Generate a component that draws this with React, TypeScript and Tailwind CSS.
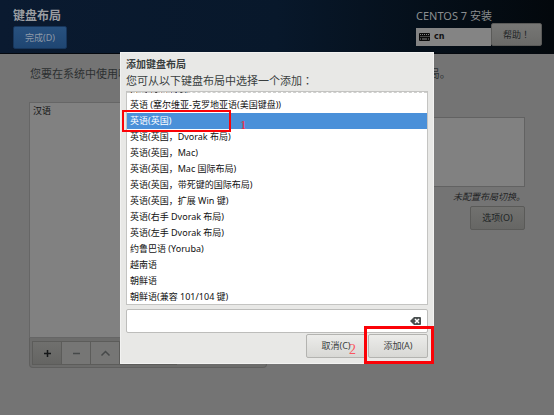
import React, { useState } from 'react';

const layouts = [
    '英语(尼日利亚)',
    '英语 (塞尔维亚-克罗地亚语(美国键盘))',
    '英语(英国)',
    '英语(英国，Dvorak 布局)',
    '英语(英国，Mac)',
    '英语(英国，Mac 国际布局)',
    '英语(英国，带死键的国际布局)',
    '英语(英国，扩展 Win 键)',
    '英语(右手 Dvorak 布局)',
    '英语(左手 Dvorak 布局)',
    '约鲁巴语 (Yoruba)',
    '越南语',
    '朝鲜语',
    '朝鲜语(兼容 101/104 键)',
];

const KeyboardIcon = () => (
    <svg width="11" height="8" viewBox="0 0 11 8" aria-hidden="true">
        <rect width="11" height="8" rx="1" fill="#0b0b0b" />
        <path d="M1 1.5h9M1.5 3.5h9" stroke="#858585" strokeWidth="1" strokeDasharray="1 1" />
        <path d="M1 6h1M3 6h5M9 6h1" stroke="#858585" strokeWidth="1" />
    </svg>
);

const ClearIcon = () => (
    <svg width="11" height="8" viewBox="0 0 11 8" aria-hidden="true">
        <path d="M4 0h6a1 1 0 0 1 1 1v6a1 1 0 0 1-1 1H4L0 4z" fill="#4a4f50" />
        <path d="M5 2l4 4M9 2l-4 4" stroke="#fff" strokeWidth="1.5" />
    </svg>
);

const toolbarItems = [
    { label: '添加', d: 'M4 7.5h7M7.5 4v7', active: true },
    { label: '删除', d: 'M4 7.5h7', active: false },
    { label: '上移', d: 'M3.5 9.5l4-4 4 4', active: false },
    { label: '下移', d: 'M3.5 5.5l4 4 4-4', active: false },
    { label: '预览', d: 'M3 5h9v5H3z', active: false },
];

const Header = () => (
    <header className="flex h-[54px] items-start justify-between border-b border-[#04080e] bg-linear-to-r from-[#0a1a30] via-[#08182b] to-[#03080c] pt-2 pr-3 pl-[13px]">
        <div>
            <h1 className="h-[15px] text-[12px] leading-[15px] font-bold text-[#9a9da1]">键盘布局</h1>
            <button className="h-[23px] w-[54px] rounded-xs border border-[#16355b] bg-linear-to-b from-[#28517f] to-[#1f4672] text-[9px] text-[#8d99a8]">
                完成(D)
            </button>
        </div>
        <div>
            <p className="h-[15px] text-[11px] leading-[15px] text-[#8b8e90]">CENTOS 7 安装</p>
            <div className="flex items-end">
                <div className="flex h-[18px] w-[75px] items-center gap-1 bg-[#848484] pl-[3px] font-['DejaVu_Sans',sans-serif] text-[8px] font-bold text-[#111]">
                    <KeyboardIcon />
                    cn
                </div>
                <button className="h-[23px] w-[51px] rounded-xs border border-[#5a5a58] bg-linear-to-b from-[#777775] to-[#6a6a68] font-['Noto_Sans','Noto_Sans_CJK_TC',sans-serif] text-[9px] text-[#202425]">
                    帮助！
                </button>
            </div>
        </div>
    </header>
);

const LayoutPanel = () => (
    <section className="flex w-[238px] flex-col">
        <ul className="h-[236px] border border-[#666] bg-[#818181] text-[9px] leading-4 text-[#111]">
            <li className="px-[3px]">汉语</li>
        </ul>
        <div className="flex rounded-b-sm border border-t-0 border-[#5f5f5e] bg-[#6c6c6b] px-[2px] pt-[3px] pb-[2px]">
            {toolbarItems.map(item => (
                <button
                    key={item.label}
                    aria-label={item.label}
                    className={`flex h-6 w-[29px] items-center justify-center border border-r-0 border-[#5c5c5a] last:border-r ${
                        item.active ? 'bg-linear-to-b from-[#70706e] to-[#656563] text-[#161819]' : 'bg-[#767675] text-[#464949]'
                    }`}
                >
                    <svg width="15" height="15" viewBox="0 0 15 15" fill="none" stroke="currentColor" strokeWidth="1.5">
                        <path d={item.d} />
                    </svg>
                </button>
            ))}
        </div>
    </section>
);

const TestPanel = () => (
    <section className="flex w-[237px] flex-col items-end pt-[15px]">
        <textarea aria-label="测试布局配置" className="block h-[70px] w-full resize-none border border-[#626262] bg-[#818181]" />
        <p className="pt-px text-[9px] leading-[18px] text-[#1e2223] italic">未配置布局切换。</p>
        <button className="h-6 w-[55px] rounded-xs border border-[#5a5a58] bg-linear-to-b from-[#71716f] to-[#666664] text-[9px] text-[#202425]">
            选项(O)
        </button>
    </section>
);

const AddLayoutDialog = () => {
    const [selected, setSelected] = useState('英语(英国)');
    const [filter, setFilter] = useState('');

    return (
        <div className="fixed inset-0 flex items-center justify-center">
            <div
                role="dialog"
                aria-labelledby="dialog-title"
                className="w-full max-w-[314px] border border-[#f2f2f1] bg-[#e8e8e6] px-[5px] pt-1 pb-[5px] text-[#3a3f40]"
            >
                <h2 id="dialog-title" className="text-[10px] leading-[14px] font-bold">添加键盘布局</h2>
                <p id="list-label" className="h-5 font-['Noto_Sans','Noto_Sans_CJK_TC',sans-serif] text-[11px] leading-5">
                    您可从以下键盘布局中选择一个添加：
                </p>
                <div className="relative">
                    <ul
                        role="listbox"
                        aria-labelledby="list-label"
                        className="h-[214px] overflow-hidden border border-[#c4c4c2] bg-white text-[9px] leading-4 text-[#111]"
                    >
                        {layouts.map(name => (
                            <li
                                key={name}
                                role="option"
                                aria-selected={name === selected}
                                onClick={() => setSelected(name)}
                                className={`h-4 pl-[3px] whitespace-nowrap first:-mt-[11px] ${name === selected ? 'bg-[#4a90d9] text-white' : ''}`}
                            >
                                {name}
                            </li>
                        ))}
                    </ul>
                    <div className="absolute inset-x-px top-px border-t border-dashed border-[#cfcfcd]"></div>
                    <div className="absolute top-[19px] -left-1 h-[22px] w-[109px] border-2 border-[#fb0207]"></div>
                    <span className="absolute top-[26px] left-[114px] font-['Liberation_Serif',serif] text-[13px] leading-4 text-[#ff2030]">1</span>
                </div>
                <div className="mt-1 flex h-6 items-center rounded-xs border border-[#bdbdbb] bg-white pr-[6px]">
                    <input
                        aria-label="搜索布局"
                        value={filter}
                        onChange={e => setFilter(e.target.value)}
                        className="min-w-0 flex-1 px-1 text-[9px] outline-none"
                    />
                    <button aria-label="清除" onClick={() => setFilter('')}>
                        <ClearIcon />
                    </button>
                </div>
                <div className="mt-px flex justify-end gap-[2px] text-[9px]">
                    <div className="relative">
                        <button className="h-6 w-[60px] rounded-xs border border-[#b3b3b0] bg-linear-to-b from-[#ececea] to-[#d8d8d5]">取消(C)</button>
                        <span className="absolute top-2 left-[43px] font-['Liberation_Serif',serif] text-[14px] leading-4 text-[#fb5560]">2</span>
                    </div>
                    <div className="relative">
                        <button className="h-6 w-[60px] rounded-xs border border-[#b3b3b0] bg-linear-to-b from-[#ececea] to-[#d8d8d5]">添加(A)</button>
                        <div className="absolute -top-2 -left-1 h-[38px] w-[70px] border-3 border-[#fb0207]"></div>
                    </div>
                </div>
            </div>
        </div>
    );
};

export default function App() {
    return (
        <div className="min-h-screen bg-[#747474] font-['Noto_Sans','Noto_Sans_CJK_SC',sans-serif]">
            <Header />
            <main className="pt-[11px] pr-[29px] pl-[29px]">
                <p className="pl-px text-[11px] leading-[18px] whitespace-nowrap text-[#2c3031]">
                    您要在系统中使用哪种键盘布局？ 您可以移动任何布局到列表顶部将其设为默认布局。
                </p>
                <div className="mt-[19px] flex justify-between">
                    <LayoutPanel />
                    <TestPanel />
                </div>
            </main>
            <AddLayoutDialog />
        </div>
    );
}
